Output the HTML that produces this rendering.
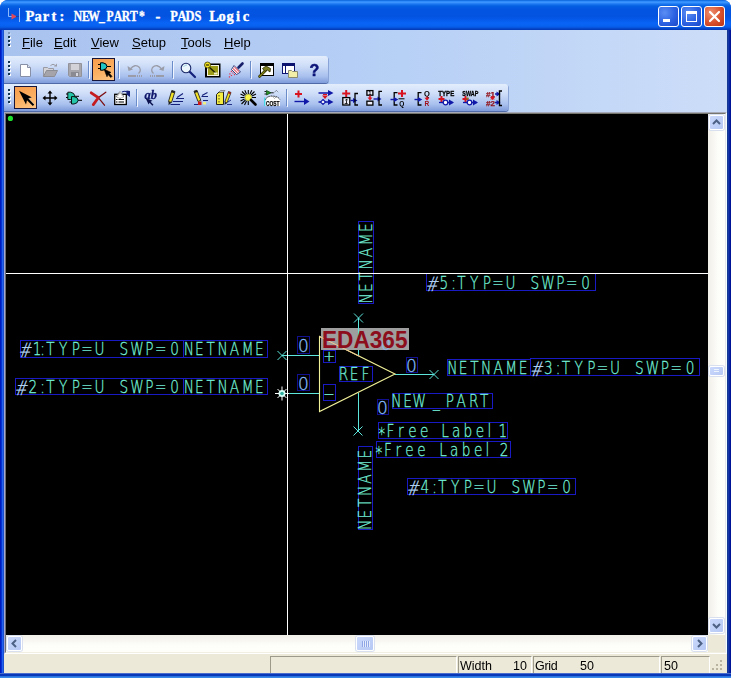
<!DOCTYPE html>
<html>
<head>
<meta charset="utf-8">
<title>Part: NEW_PART* - PADS Logic</title>
<style>
html,body{margin:0;padding:0;background:#fff;}
body{width:731px;height:678px;overflow:hidden;position:relative;font-family:"Liberation Sans",sans-serif;}
#win{position:absolute;left:0;top:0;width:731px;height:678px;background:#0a4fdc;border-radius:8px 8px 0 0;overflow:hidden;}
#win:before{content:"";position:absolute;left:0;top:30px;width:731px;height:648px;background:linear-gradient(to right,#001cc0 0,#001cc0 1px,#0634d4 1px,#0634d4 2px,#2260f0 2px,#2260f0 3px,#1a50d0 3px,#1a50d0 4px,#0a50e0 4px,#0a50e0 727px,#163a94 727px,#163a94 728px,#1636a8 728px,#1636a8 729px,#0624a0 729px,#0624a0 730px,#001498 730px);}
#win:after{content:"";position:absolute;left:0;top:673px;width:731px;height:5px;z-index:3;background:linear-gradient(to bottom,#4a6ccc 0,#4a6ccc 1px,#0838b8 1px,#0838b8 3px,#2a74e0 3px,#2a74e0 4px,#3a88e8 4px);}
#title{position:absolute;left:0;top:0;width:731px;height:30px;
 background:linear-gradient(to bottom,#0058d0 0px,#2a88f8 1px,#3a94fe 2.5px,#1c78f0 4px,#0560e2 6px,#0355e0 9px,#0353e0 16px,#0558e8 19px,#0964f6 23px,#0862f0 26px,#0656e0 27.5px,#0548cc 28.5px,#0338b4 30px);}
#title .txt{position:absolute;left:26px;top:9px;color:#fff;font-family:"Liberation Mono",monospace;font-weight:bold;font-size:15px;letter-spacing:-1px;line-height:18px;white-space:pre;text-shadow:1px 1px 0 #0a2f9a;}
.wb{position:absolute;top:6px;width:19px;height:19px;border:1px solid #fff;border-radius:3px;background:radial-gradient(circle at 30% 30%,#5b8ef4 0%,#2c62e2 55%,#1a48c8 100%);}
.wb.close{background:radial-gradient(circle at 30% 30%,#ee9070 0%,#d8502c 55%,#b83414 100%);}
.wb svg{position:absolute;left:0;top:0;}
#client{position:absolute;left:4px;top:30px;width:723px;height:644px;background:linear-gradient(to right,#a9c3ef,#b4cef5 48%,#ccddf8);z-index:1;}
#menubar{position:absolute;left:0;top:0;width:723px;height:26px;will-change:transform;}
#menubar span{position:absolute;top:5px;font-size:13px;line-height:16px;color:#000;}
.tb{position:absolute;left:0px;height:27px;border-radius:0 3px 3px 0;background:linear-gradient(to bottom,#e3edfc 0%,#cfdef8 35%,#a9c1ee 75%,#7f9cdb 100%);box-shadow:0 1px 0 #4f6aa6,1px 1px 0 #8aa4d8;}
.grip{position:absolute;left:4px;top:5px;width:3px;height:16px;}
.grip i{position:absolute;left:1px;width:2px;height:2px;background:#fff;}
.grip i:before{content:"";position:absolute;left:-1px;top:-1px;width:2px;height:2px;background:#12344e;}
.sep{position:absolute;top:5px;width:1px;height:17px;background:#6a8cc8;box-shadow:1px 1px 0 #f0f5ff;}
.sel{position:absolute;width:21px;height:21px;border:1px solid #16163c;background:linear-gradient(160deg,#f89c4c,#fbb062 55%,#fdc684);}
#frame{position:absolute;left:0;top:82px;width:719px;height:538px;border:2px solid;border-color:#a6aab8 #f4ffff #fff #a2a8d2;background:#ece9d8;}
#frame:before{content:"";position:absolute;left:-1px;top:-1px;width:719px;height:538px;border:1px solid;border-color:#77766e #e6e6ea #f1efe2 #6c6c74;}
#canvas{position:absolute;left:2px;top:84px;width:702px;height:521px;background:#000;overflow:hidden;}
#vs{position:absolute;left:704px;top:84px;width:17px;height:521px;background:linear-gradient(to right,#f1efe8,#fdfdfa 60%,#fefefb);}
#hs{position:absolute;left:2px;top:605px;width:702px;height:17px;background:linear-gradient(to bottom,#f1efe8,#fdfdfa 60%,#fefefb);}
#corner{position:absolute;left:704px;top:605px;width:17px;height:17px;background:#ece9d8;}
.sbtn{position:absolute;width:13px;height:13px;border:1px solid #fff;border-radius:2px;background:linear-gradient(135deg,#cad8fb,#b6c9f4);box-shadow:0 0 0 1px #d8e0f0;}
.sbtn svg{position:absolute;left:0;top:0;}
#status{position:absolute;left:0;top:624px;width:723px;height:20px;background:#ece9d8;}
.pane{position:absolute;top:2px;height:17px;border:1px solid #9d9a8c;border-right-color:#fff;border-bottom-color:#fff;font-size:12.5px;line-height:17px;color:#000;white-space:pre;}
.pane b{position:absolute;font-weight:normal;top:1px;will-change:transform;}
</style>
</head>
<body>
<div id="win">
 <div id="title">
  <svg width="16" height="16" viewBox="0 0 16 16" style="position:absolute;left:7px;top:7px"><path d="M1.500,1V9.500H7M12.500,1V15" stroke="#8cb8fc" fill="none"/><path d="M4.500,6.500L10,9.500L4.500,12.500Z" fill="#e04858"/><path d="M9,9.500H12" stroke="#2040a0"/></svg>
  <svg width="300" height="30" style="position:absolute;left:0;top:0"><g style="font-family:'Liberation Serif',serif;font-weight:bold;font-size:14.500px;fill:#fff;stroke:#fff;stroke-width:0.350px"><text transform="scale(1,1)" x="30.0 38.0 46.0 54.0 62.0" y="21" text-anchor="middle">Part:</text><text transform="scale(0.8,1)" x="97.5 107.5 117.5 127.5 137.5 147.5 157.5 167.5 177.5" y="21" text-anchor="middle">NEW_PART*</text><text transform="scale(1,1)" x="158.0" y="21" text-anchor="middle">-</text><text transform="scale(0.86,1)" x="202.3 211.6 220.9 230.2" y="21" text-anchor="middle">PADS</text><text transform="scale(1,1)" x="214.0 222.0 230.0 238.0 246.0" y="21" text-anchor="middle">Logic</text></g></svg>
  <div class="wb" style="left:658px"><svg width="19" height="19"><rect x="4" y="12" width="7" height="3" fill="#fff"/></svg></div>
  <div class="wb" style="left:681px"><svg width="19" height="19"><rect x="4.500" y="5.500" width="10" height="9" fill="none" stroke="#fff"/><rect x="4" y="4" width="11" height="3" fill="#fff"/></svg></div>
  <div class="wb close" style="left:704px"><svg width="19" height="19"><path d="M5,5L14,14M14,5L5,14" stroke="#fff" stroke-width="2.200" stroke-linecap="round"/></svg></div>
 </div>
 <div id="client">
  <div id="menubar">
   <div class="grip" style="left:4px;top:2px"><i style="top:1px;opacity:0.300"></i><i style="top:5px"></i><i style="top:9px"></i><i style="top:13px"></i></div>
   <span style="left:18px"><u>F</u>ile</span>
   <span style="left:50px"><u>E</u>dit</span>
   <span style="left:87px"><u>V</u>iew</span>
   <span style="left:128px"><u>S</u>etup</span>
   <span style="left:177px"><u>T</u>ools</span>
   <span style="left:220px"><u>H</u>elp</span>
  </div>
  <div class="tb" id="tb1" style="top:26px;width:324px">
   <div class="grip"><i style="top:1px"></i><i style="top:5px"></i><i style="top:9px"></i><i style="top:13px"></i></div>
   <div class="sel" style="left:88px;top:2px"></div>
   <div class="sep" style="left:84px"></div><div class="sep" style="left:114px"></div><div class="sep" style="left:168px"></div><div class="sep" style="left:246px"></div>
  </div>
  <div class="tb" id="tb2" style="top:54px;width:504px">
   <div class="grip"><i style="top:1px"></i><i style="top:5px"></i><i style="top:9px"></i><i style="top:13px"></i></div>
   <div class="sel" style="left:10px;top:2px"></div>
   <div class="sep" style="left:132px"></div><div class="sep" style="left:282px"></div>
  </div>
  <div id="frame"></div>
  <div id="canvas">
<svg id="cv" width="702" height="521" viewBox="6 114 702 521" style="position:absolute;left:0;top:0">
<style>
.t{font-family:"DejaVu Sans Light","DejaVu Sans","Liberation Sans",sans-serif;font-weight:200;font-size:18px;fill:#74f0d8;stroke:#74f0d8;stroke-width:0.3px;}
.p{fill:#86bcff;stroke:#86bcff;}
.h{fill:#b8dcff;stroke:#b8dcff;font-style:italic;font-size:20px;}
.b{fill:none;stroke:#1a1ac4;stroke-width:1;shape-rendering:crispEdges;}
.bd{fill:none;stroke:#101090;stroke-width:1;shape-rendering:crispEdges;}
.l{stroke:#5ce6dc;stroke-width:1;fill:none;shape-rendering:crispEdges;}
.x{stroke:#5ce6dc;stroke-width:1;fill:none;}
</style>
<circle cx="10.400" cy="118.400" r="2.600" fill="#1ce02c"/>
<!-- pin lines -->
<path class="l" d="M282,355.5H320M282,393.5H320M395,374.5H434M358.5,318V355M358.5,393V431"/>
<path class="x" d="M277.5,351l9,9m0,-9l-9,9M429.500,370l9,9m0,-9l-9,9M354,313.500l9,9m0,-9l-9,9M353.500,426.500l9,9m0,-9l-9,9"/>
<!-- body -->
<path d="M319.500,336.500V411.500L395,374Z" fill="none" stroke="#f2f29a" stroke-width="1.100"/>
<!-- label boxes -->
<path class="b" d="M20.500,340.500H183.500V357.500H20.500ZM183.500,340.500H267.500V357.500H183.500ZM15.500,378.500H183.500V394.500H15.500ZM183.500,378.500H267.500V394.500H183.500Z"/>
<path class="b" d="M426.500,273.500H595.500V290.500H426.500ZM447.500,359.500H530.500V375.500H447.500ZM530.500,358.500H699.500V375.500H530.500ZM392.500,393.500H492.500V408.500H392.500ZM378.500,422.500H507.500V438.500H378.500ZM376.500,441.500H510.500V457.500H376.500ZM407.500,478.500H575.500V494.500H407.500Z"/>
<path class="b" d="M358.500,221.500H373.500V303.500H358.500ZM358.500,446.500H372.500V529.500H358.500ZM323.500,350.500H335.500V362.500H323.500ZM323.500,384.500H335.500V400.500H323.500ZM339.500,366.500H372.500V381.500H339.500Z"/>
<path class="bd" d="M297.500,336.500H309.500V353.500H297.500ZM297.500,374.500H309.500V390.500H297.500ZM406.500,357.500H417.500V372.500H406.500ZM377.500,399.500H388.500V414.500H377.500Z"/>
<!-- texts -->
<text class="t" text-anchor="middle" transform="translate(0,355.4) scale(0.76,1)" x="32.5 48.9 55.9 66.2 83.2 99.7 114.5 130.9 146.7 163.0 180.3 196.4 211.5 229.6"><tspan class="h" dy="2">#</tspan><tspan dy="-2">1:TYP=U SWP=0</tspan></text>
<text class="t" text-anchor="middle" transform="translate(0,355.4) scale(0.76,1)" x="248.4 262.4 277.3 292.8 308.4 325.7 341.3">NETNAME</text>
<text class="t" text-anchor="middle" transform="translate(0,392.6) scale(0.76,1)" x="27.0 43.2 55.9 66.2 83.2 99.7 114.5 130.9 146.7 163.0 180.3 196.4 211.5 229.6"><tspan class="h" dy="2">#</tspan><tspan dy="-2">2:TYP=U SWP=0</tspan></text>
<text class="t" text-anchor="middle" transform="translate(0,392.6) scale(0.76,1)" x="248.4 262.4 277.3 292.8 308.4 325.7 341.3">NETNAME</text>
<text class="t" text-anchor="middle" transform="translate(0,288.6) scale(0.76,1)" x="567.8 583.9 596.7 607.0 624.0 640.5 655.3 671.7 687.5 703.8 721.1 737.2 752.3 770.4"><tspan class="h" dy="2">#</tspan><tspan dy="-2">5:TYP=U SWP=0</tspan></text>
<text class="t" text-anchor="middle" transform="translate(0,373.6) scale(0.76,1)" x="595.3 609.3 624.3 639.7 655.4 672.6 688.3">NETNAME</text>
<text class="t" text-anchor="middle" transform="translate(0,373.6) scale(0.76,1)" x="705.3 721.4 734.2 744.5 761.5 778.0 792.8 809.2 825.0 841.3 858.6 874.7 889.8 907.9"><tspan class="h" dy="2">#</tspan><tspan dy="-2">3:TYP=U SWP=0</tspan></text>
<text class="t" text-anchor="middle" transform="translate(0,406.8) scale(0.76,1)" x="521.7 536.2 551.8 574.3 592.1 606.9 623.4 637.2">NEW_PART</text>
<text class="t" text-anchor="middle" transform="translate(0,436.6) scale(0.76,1)" x="502.3 513.7 527.5 542.8 558.2 571.1 585.5 600.3 615.5 631.6 643.8 652.6 661.7"><tspan dy="3.500">*</tspan><tspan dy="-3.500">Free Label 1</tspan></text>
<text class="t" text-anchor="middle" transform="translate(0,455.6) scale(0.76,1)" x="498.7 510.4 524.2 538.9 554.6 568.4 583.0 597.7 613.2 629.1 641.4 651.3 663.2"><tspan dy="3.500">*</tspan><tspan dy="-3.500">Free Label 2</tspan></text>
<text class="t" text-anchor="middle" transform="translate(0,492.8) scale(0.76,1)" x="542.8 558.9 571.7 582.0 599.0 615.5 630.3 646.7 662.5 678.8 696.1 712.2 727.3 745.4"><tspan class="h" dy="2">#</tspan><tspan dy="-2">4:TYP=U SWP=0</tspan></text>
<text class="t" text-anchor="middle" transform="translate(371.6,303) rotate(-90) scale(0.76,1)" x="6.2 20.3 35.2 50.7 66.3 83.6 99.2">NETNAME</text>
<text class="t" text-anchor="middle" transform="translate(370.6,529.5) rotate(-90) scale(0.76,1)" x="6.2 20.3 35.2 50.7 66.3 83.6 99.2">NETNAME</text>
<text class="t" text-anchor="middle" transform="translate(0,379.8) scale(0.76,1)" x="452.0 465.9 480.8">REF</text>
<text class="t" x="329" y="361" text-anchor="middle" style="font-size:14px">+</text>
<text class="t" x="329" y="399" text-anchor="middle" style="font-size:14px">−</text>
<text class="t p" x="298" y="352" style="font-size:17px">0</text>
<text class="t p" x="298" y="390" style="font-size:17px">0</text>
<text class="t p" x="406" y="372" style="font-size:17px">0</text>
<text class="t p" x="377" y="414" style="font-size:17px">0</text>
<!-- pin 2 marker -->
<g transform="translate(282,393.500)"><path d="M0,-7V7M-7,0H7M-4.500,-4.500L4.500,4.500M4.500,-4.500L-4.500,4.500" stroke="#fff" stroke-width="1"/><circle r="3.500" fill="#d8fff8"/><circle r="1.800" fill="#30b0a0"/></g>
<!-- watermark -->
<rect x="321" y="328" width="88" height="22" fill="#9e9e9e"/>
<path d="M319.500,336.500L360,356.600" stroke="#f0c890" stroke-width="1"/>
<path class="l" d="M358.500,328V340"/>
<text class="t p" x="381" y="350" style="font-size:16px" opacity="0.750">0</text>
<text x="322" y="348" style="font-family:'Liberation Sans',sans-serif;font-weight:bold;font-size:23px;fill:#8c0d1c" textLength="85.500" lengthAdjust="spacingAndGlyphs">EDA365</text>
<!-- cursor -->
<path d="M287.500,113V635M6,273.500H708" stroke="#fff" stroke-width="1" shape-rendering="crispEdges"/>
</svg>
  </div>
  <div id="vs">
   <div class="sbtn" style="left:1px;top:1px"><svg width="13" height="13"><path d="M3,8L6.500,4.500L10,8" stroke="#4d6185" stroke-width="2" fill="none"/></svg></div>
   <div class="sbtn" style="left:1px;top:252px;height:8px"><svg width="13" height="8"><path d="M4,2.500H9M4,4.500H9" stroke="#eef4fe" stroke-width="1"/></svg></div>
   <div class="sbtn" style="left:1px;top:504px"><svg width="13" height="13"><path d="M3,5L6.500,8.500L10,5" stroke="#4d6185" stroke-width="2" fill="none"/></svg></div>
  </div>
  <div id="hs">
   <div class="sbtn" style="left:1px;top:1px"><svg width="13" height="13"><path d="M8,3L4.500,6.500L8,10" stroke="#4d6185" stroke-width="2" fill="none"/></svg></div>
   <div class="sbtn" style="left:350px;top:1px;width:16px"><svg width="16" height="13"><path d="M5.500,4V10M7.500,4V10M9.500,4V10M11.500,4V10" stroke="#8ea6e6" stroke-width="1"/><path d="M6.500,4V10M8.500,4V10M10.500,4V10M12.500,4V10" stroke="#f4f8ff" stroke-width="1" opacity="0.700"/></svg></div>
   <div class="sbtn" style="left:686px;top:1px"><svg width="13" height="13"><path d="M5,3L8.500,6.500L5,10" stroke="#4d6185" stroke-width="2" fill="none"/></svg></div>
  </div>
  <div id="corner"></div>
  <div id="status">
   <div class="pane" style="left:266px;width:185px"></div>
   <div class="pane" style="left:454px;width:72px"><b style="left:1px">Width</b><b style="right:4px">10</b></div>
   <div class="pane" style="left:529px;width:125px"><b style="left:0.500px;letter-spacing:-0.300px">Grid</b><b style="left:45.500px">50</b></div>
   <div class="pane" style="left:657px;width:47px"><b style="left:2px">50</b></div>
   <svg width="14" height="14" style="position:absolute;left:707px;top:5px"><g fill="#b8b4a0"><rect x="9" y="1" width="2" height="2"/><rect x="5" y="5" width="2" height="2"/><rect x="9" y="5" width="2" height="2"/><rect x="1" y="9" width="2" height="2"/><rect x="5" y="9" width="2" height="2"/><rect x="9" y="9" width="2" height="2"/></g></svg>
  </div>
 </div>
<svg id="ic" width="731" height="113" viewBox="0 0 731 113" style="position:absolute;left:0;top:0;pointer-events:none;z-index:5;will-change:transform">
<defs>
<style>
.it{font-family:"Liberation Sans",sans-serif;font-weight:bold;}
.ce{shape-rendering:crispEdges;}
</style>
</defs>
<!-- ===== toolbar 1 ===== -->
<!-- new -->
<g transform="translate(18,62)"><path d="M2.500,2.500H9.500L12.500,5.500V14.500H2.500Z" fill="#fff" stroke="#8790a6"/><path d="M9.500,2.500V5.500H12.500" fill="#e4e8f0" stroke="#8790a6"/></g>
<!-- open (disabled) -->
<g transform="translate(42,62)"><path d="M1.500,14.500V5.500H5.500L6.500,6.500H11.500V8.500" fill="#d4d4d8" stroke="#9a9aa2"/><path d="M1.500,14.500L4.500,8.500H15.500L12.500,14.500Z" fill="#a4a4aa" stroke="#8c8c94"/><path d="M8.500,3.500Q11,1 13.500,3.500" fill="none" stroke="#9a9aa2"/><path d="M12,4.500H15V1.500Z" fill="#9a9aa2"/></g>
<!-- save (disabled) -->
<g transform="translate(66,62)"><path d="M2.500,1.500H15.500V14.500H3.500L2.500,13.500Z" fill="#a6a6ac" stroke="#92929a"/><rect x="5" y="2" width="8" height="6" fill="#d2d2d8"/><rect x="5" y="10" width="8" height="5" fill="#8a8a92"/><rect x="10" y="11" width="2" height="3" fill="#d8d8de"/></g>
<!-- select gate -->
<g transform="translate(96,62)"><path d="M2,2.500H5M2,6.500H5M10,4.500H15" stroke="#000" fill="none"/><path d="M4.500,0.800H7Q11,1.500 11,4.500Q10.500,7.500 7,8.200H4.500Z" fill="#20c4c4" stroke="#000"/><path d="M8,7L15,10.500L13.200,11.300L16,14.300L14.800,15.500L12,12.600L11,14.800Z" fill="#000" stroke="#000" stroke-width="0.600"/></g>
<!-- undo (disabled) -->
<g transform="translate(126,62)" fill="none" stroke="#9a9ca8"><path d="M4,7.500Q9,1 13.500,5.500Q15.500,9 12.500,11.500" stroke-width="1.300"/><path d="M1.500,4L2.500,9L7,7.500Z" fill="#9a9ca8" stroke="none"/><path d="M2,14H10" stroke-width="2"/><path d="M11,14H16" stroke-width="2" stroke-dasharray="1 1"/></g>
<!-- redo (disabled) -->
<g transform="translate(166,62) scale(-1,1)" fill="none" stroke="#9a9ca8"><path d="M4,7.500Q9,1 13.500,5.500Q15.500,9 12.500,11.500" stroke-width="1.300"/><path d="M1.500,4L2.500,9L7,7.500Z" fill="#9a9ca8" stroke="none"/><path d="M2,14H10" stroke-width="2"/><path d="M11,14H16" stroke-width="2" stroke-dasharray="1 1"/></g>
<!-- zoom -->
<g transform="translate(180,62)"><path d="M9.500,9.500L15,15" stroke="#14207a" stroke-width="2.200" stroke-linecap="round"/><circle cx="6" cy="6" r="4.800" fill="#eaf6fb" stroke="#1a2668" stroke-width="1.100"/><path d="M3.500,5Q4.500,2.800 7,3" stroke="#9fd0e0" fill="none"/></g>
<!-- sheet -->
<g transform="translate(204,62)"><rect x="1" y="1.500" width="15.500" height="14" fill="#000"/><rect x="3" y="3" width="12" height="11" fill="#f4f4e0"/><rect x="4" y="4" width="10" height="9" fill="#9c9c18"/><path d="M4,4L11.500,11" stroke="#202000" stroke-width="1.400"/><rect x="10" y="10.500" width="3.500" height="2" fill="#f4f4c0"/><circle cx="3.500" cy="3" r="3" fill="#f0e020" stroke="#404000" stroke-width="0.800"/><path d="M2,3H5" stroke="#000"/></g>
<!-- brush -->
<g transform="translate(228,62)"><path d="M10.500,5.500L14.500,1.500" stroke="#18206a" stroke-width="2.600" stroke-linecap="round"/><path d="M6,3.500L12.500,10L8.500,12.500L3.500,7.500Z" fill="#fff" stroke="#2a3070" stroke-width="0.900"/><path d="M5,6.500L9.500,11M6.500,5L11,9.500" stroke="#e86a7a" stroke-width="1.100"/><path d="M3,9L7,13M1.500,11.500L4.500,14.500M1,14.500L2,15.500" stroke="#e83048" stroke-width="1.200" stroke-dasharray="1.200 1"/></g>
<!-- hammer window -->
<g transform="translate(258,62)"><rect x="2.500" y="1.500" width="13" height="12" fill="#fff" stroke="#000"/><rect x="2" y="1" width="14" height="3" fill="#000"/><path d="M1.500,14.500L8,8" stroke="#2c2c00" stroke-width="2.600" stroke-linecap="round"/><path d="M1.500,14.500L8,8" stroke="#8a8a18" stroke-width="1.100" stroke-linecap="round"/><path d="M4.500,6.500L8,4L12.500,6.500L12,10L9.300,8L7,9.500Z" fill="#7c7c20" stroke="#2c2c00" stroke-width="0.800"/></g>
<!-- project window -->
<g transform="translate(282,62)"><rect x="0.500" y="1.500" width="12" height="10" fill="#fff" stroke="#0c1470"/><rect x="0" y="1" width="13" height="3" fill="#0c1470"/><path d="M3.500,4V12" stroke="#0c1470"/><path d="M6.500,15.500V8.500H9.500L10.500,9.500H15.500V15.500Z" fill="#f2f0a8" stroke="#8a8a70"/></g>
<!-- help -->
<text class="it" x="314.500" y="75.800" text-anchor="middle" font-size="16" fill="#0c1478" stroke="#0c1478" stroke-width="0.500">?</text>
<!-- ===== toolbar 2 ===== -->
<!-- select arrow -->
<g transform="translate(18,90)"><path d="M1,0.800L14,7.500L10.600,8.600L16.300,14.500L14.800,16L9,10.300L8,14.600Z" fill="#000"/><path d="M14,7.500L10.600,8.600L16.300,14.500" fill="none" stroke="#fff" stroke-width="0.500" opacity="0.600"/></g>
<!-- move -->
<g transform="translate(42,90)" stroke="#000" fill="#000"><path d="M8,2V14M2,8H14" stroke-width="1.400" fill="none"/><path d="M8,0.500L10.500,3.500H5.500ZM8,15.500L10.500,12.500H5.500ZM0.500,8L3.500,5.500V10.500ZM15.500,8L12.500,5.500V10.500Z" stroke="none"/></g>
<!-- gates -->
<g transform="translate(66,90)"><path d="M0,4H2M0,7.500H2M8.500,6.300H13M3.500,8.500H5.500M3.500,12H5.500M12,10.300H16" stroke="#000" fill="none"/><path d="M1.800,2.200H4.500Q8.500,2.800 8.700,5.800Q8.500,8.800 4.500,9.500H1.800Z" fill="#24c4a8" stroke="#000" stroke-width="0.900"/><path d="M5.500,6.600H8Q12,7.200 12.200,10.300Q12,13.300 8,14H5.500Z" fill="#24c4a8" stroke="#000" stroke-width="0.900"/></g>
<!-- delete -->
<g transform="translate(90,90)"><path d="M15.800,2.200L8.300,7.700L14.500,15.200" stroke="#7c1014" stroke-width="1.300" fill="none" stroke-linecap="round"/><path d="M1.200,2.800L8.300,7.700L3.300,14.600" stroke="#c41c20" stroke-width="2.800" fill="none" stroke-linecap="round" stroke-linejoin="round"/></g>
<!-- properties -->
<g transform="translate(114,90)"><rect x="0.700" y="4.300" width="11.600" height="10.200" fill="#fff" stroke="#000" stroke-width="1.300"/><path d="M2,9.500H3.500M4.500,9.500H10M2,12H3.500M4.500,12H10" stroke="#000" stroke-width="1.200"/><path d="M2,6.500L6,1.500L10,6.500L6,8.500Z" fill="#fff" stroke="#404040" stroke-width="0.800" stroke-dasharray="1 0.600"/><path d="M3.500,6L6,3L8.500,6" fill="none" stroke="#606060" stroke-width="0.800" stroke-dasharray="0.800 0.800"/><path d="M8,2Q11,0.500 13,2" stroke="#14207a" fill="none" stroke-width="1.200"/><path d="M12.500,0.500L16,1V7L12.500,4.500Z" fill="#14207a"/></g>
<!-- ab -->
<g transform="translate(144,90)"><text x="0.500" y="8.500" font-family="Liberation Serif,serif" font-style="italic" font-weight="bold" font-size="12.500" fill="#10186c" stroke="#10186c" stroke-width="0.300">ab</text><path d="M1.500,8L8.500,10.800L6.600,11.700L9.500,14.800L8.400,15.800L5.600,12.800L4.600,14.600Z" fill="#0c1250"/></g>
<!-- pencil lines -->
<g transform="translate(168,90)"><path d="M3.800,0.500L7,1.500L3.500,12.500L0.500,11.500Z" fill="#f4e428" stroke="#202020" stroke-width="0.900"/><path d="M3.800,0.500L7,1.500L6.400,3.300L3.200,2.300Z" fill="#202020"/><path d="M0.500,11.500L3.500,12.500L0.600,15.300Z" fill="#202020"/><path d="M9,7.500L15,3.500M8,8.500H16M5,11.500H15M2.500,14.500H12" stroke="#14207a" fill="none" stroke-width="1.100"/></g>
<!-- pencil dot -->
<g transform="translate(192,90)"><path d="M2,1.200L5,0.300L8.800,10.300L6,11.500Z" fill="#f4e428" stroke="#202020" stroke-width="0.900"/><path d="M2,1.200L5,0.300L5.600,2L2.700,3Z" fill="#202020"/><path d="M10,5.500L15.500,2.500M9.500,6.500H16M11,10.500H16M2,14.500H7" stroke="#14207a" fill="none" stroke-width="1.100"/><rect x="6" y="11.500" width="3.500" height="3.500" fill="#d01818"/><rect x="11" y="12" width="3" height="2.500" fill="#f0f080"/></g>
<!-- ruler pencil -->
<g transform="translate(216,90)"><path d="M0.500,4.500L3,2H7.500V14.500H0.500Z" fill="#f4ec40" stroke="#202020"/><path d="M3,5V6.500M3,8V9.500M3,11V12.500" stroke="#202020" stroke-width="0.800"/><path d="M3,2L4.500,0.500H9L7.500,2" fill="#b8c0c8" stroke="#606060" stroke-width="0.600"/><path d="M12.500,1.500L15,2.500L11,13L8.800,12Z" fill="#f0e020" stroke="#202020" stroke-width="0.800"/><path d="M12.500,1.500L15,2.500L14.400,4.200L12,3.200Z" fill="#a02020"/><path d="M8.800,12L11,13L8.500,15Z" fill="#202020"/><path d="M11,14.500H16M12,12L15,10" stroke="#14207a" stroke-width="0.900"/></g>
<!-- sun -->
<g transform="translate(240,90)"><path d="M8.300,0V4M8.300,11V15M0.500,7.500H4.500M12,7.500H16M2,1.500L5.500,5M14.500,1.500L11,5M1.500,14L5.500,10M4.800,0.300L6.500,4M11.800,0.300L10,4M0.500,4L4.500,6M16,4L12,6M0.500,11L4.500,9M4.500,15L6.500,11" stroke="#000" stroke-width="1.100"/><circle cx="8.300" cy="7.500" r="3.300" fill="#f8f448" stroke="#787800" stroke-width="0.500"/><path d="M11,10L15.500,14.500" stroke="#000" stroke-width="2.600" stroke-linecap="round"/></g>
<!-- cost -->
<g transform="translate(264,90)"><path d="M1.500,16V10Q2,6.500 8,6Q14.500,6.500 16,9.500V16Z" fill="#fff"/><path d="M1.500,10Q2,6.500 8,6Q14.500,6.500 15.800,9.500" fill="none" stroke="#000" stroke-width="0.800" stroke-dasharray="1.500 0.800"/><path d="M0.500,1.500H2.500M0.500,4H2.500M6.500,2.800H9.500" stroke="#000" stroke-width="0.900"/><path d="M2.500,0.500L7,2.800L2.500,5Z" fill="#289028" stroke="#0c400c" stroke-width="0.700"/><path d="M9.500,2.800L12.500,0.500L14.500,2.500M8.500,6.500L10.500,8.500L12.500,6.500" stroke="#303030" fill="none" stroke-width="0.700" stroke-dasharray="1 0.700"/><rect x="0" y="7.500" width="1.300" height="8.500" fill="#48d8e8"/><text class="it" x="8.700" y="15.700" text-anchor="middle" font-size="7.800" fill="#000" stroke="#000" stroke-width="0.250" textLength="13.500" lengthAdjust="spacingAndGlyphs">COST</text></g>
<!-- add pin -->
<g transform="translate(294,90)"><path d="M4.500,0.500V7.500M1,4H8" stroke="#d81420" stroke-width="2"/><path d="M0.500,11.500H11" stroke="#1018a8" stroke-width="1.400"/><path d="M10,8L15.500,11.500L10,15Z" fill="#1018a8"/></g>
<!-- change seq -->
<g transform="translate(318,90)"><path d="M0.500,3H11M0.500,12H11" stroke="#1018a8" stroke-width="1.400"/><path d="M10,0L15.500,3L10,6ZM10,9L15.500,12L10,15Z" fill="#1018a8"/><path d="M4,5.500H10L7,9Z" fill="#d81420"/><path d="M5,4.500H9" stroke="#d81420" stroke-width="1"/><path d="M5,9.500L7.500,12L5,14.500L2.500,12Z" fill="#fff" stroke="#1018a8" stroke-width="1.200"/></g>
<!-- add terminal -->
<g transform="translate(342,90)"><path d="M4.200,0V7M0.200,3.500H8.200" stroke="#d81420" stroke-width="2"/><rect x="0.800" y="7.600" width="7" height="7.400" fill="#eeeefa" stroke="#000" stroke-width="1.300"/><text class="it" x="4.300" y="13.800" text-anchor="middle" font-size="6.500" font-style="italic" fill="#000">1</text><path d="M8.500,10.500H13" stroke="#1018a8" stroke-width="1.400"/><path d="M11,8L15.500,10.500L11,13Z" fill="#1018a8"/><path d="M16,3.500H13V15H16" fill="none" stroke="#000" stroke-width="1.300"/></g>
<!-- set pin number -->
<g transform="translate(366,90)"><rect x="0.900" y="0.600" width="6" height="4.600" fill="#eeeefa" stroke="#000" stroke-width="1.300"/><text class="it" x="4" y="4.800" text-anchor="middle" font-size="5" fill="#000">1</text><path d="M4,5.500V8" stroke="#d81420" stroke-width="1.600"/><path d="M1.500,7.500H6.500L4,10.500Z" fill="#d81420"/><rect x="0.900" y="11.200" width="6" height="3.900" fill="#eeeefa" stroke="#000" stroke-width="1.300"/><path d="M7.500,9H13" stroke="#1018a8" stroke-width="1.400"/><path d="M11.500,6.500L15.500,9L11.500,11.500Z" fill="#1018a8"/><path d="M16,1.300H13V15H16" fill="none" stroke="#000" stroke-width="1.300"/></g>
<!-- pin name -->
<g transform="translate(390,90)"><path d="M7.500,2.600H4.200V15H7.500" fill="none" stroke="#000" stroke-width="1.300"/><path d="M0.500,9.500H5" stroke="#1018a8" stroke-width="1.400"/><path d="M4,7L8.300,9.500L4,12Z" fill="#1018a8"/><path d="M12,0V7M8,3.500H16" stroke="#d81420" stroke-width="2"/><path d="M8.500,8.800H14.500" stroke="#000" stroke-width="1"/><text class="it" x="11.700" y="15.600" text-anchor="middle" font-size="6.500" fill="#000">Q</text></g>
<!-- rename pin -->
<g transform="translate(414,90)"><path d="M7.500,2.600H4.200V15H7.500" fill="none" stroke="#000" stroke-width="1.300"/><path d="M0.500,9.500H5" stroke="#1018a8" stroke-width="1.400"/><path d="M4,7L8.300,9.500L4,12Z" fill="#1018a8"/><text class="it" x="13" y="6" text-anchor="middle" font-size="7.500" fill="#000">Q</text><path d="M13,6.500V8.500" stroke="#d81420" stroke-width="1.400"/><path d="M10.500,7.700H15.500L13,10.700Z" fill="#d81420"/><text class="it" x="12.800" y="16" text-anchor="middle" font-size="6.500" fill="#a01018">R</text></g>
<!-- TYPE -->
<g transform="translate(438,90)"><text class="it" x="8.300" y="5.800" text-anchor="middle" font-size="7.500" fill="#000" stroke="#000" stroke-width="0.300" textLength="16" lengthAdjust="spacingAndGlyphs">TYPE</text><path d="M3.500,6V12M0.500,9H6.500" stroke="#d81420" stroke-width="2"/><path d="M1,12.500H15" stroke="#1018a8" stroke-width="1.300"/><circle cx="7.500" cy="12.500" r="2.300" fill="#fff" stroke="#1018a8" stroke-width="1.300"/><path d="M11,9.500L16,12.500L11,15.500Z" fill="#1018a8"/></g>
<!-- SWAP -->
<g transform="translate(462,90)"><text class="it" x="8.300" y="5.800" text-anchor="middle" font-size="7.500" fill="#000" stroke="#000" stroke-width="0.300" textLength="16" lengthAdjust="spacingAndGlyphs">SWAP</text><path d="M3.500,6V12M0.500,9H6.500" stroke="#d81420" stroke-width="2"/><rect x="4.500" y="7.500" width="2" height="2" fill="#808020"/><path d="M1,12.500H15" stroke="#1018a8" stroke-width="1.300"/><circle cx="7.500" cy="12.500" r="2.300" fill="#fff" stroke="#1018a8" stroke-width="1.300"/><path d="M11,9.500L16,12.500L11,15.500Z" fill="#1018a8"/></g>
<!-- #1 #2 -->
<g transform="translate(486,90)"><text class="it" x="0" y="6.500" font-size="8" fill="#901018" stroke="#901018" stroke-width="0.250" textLength="9" lengthAdjust="spacingAndGlyphs">#1</text><text class="it" x="0" y="16" font-size="8" fill="#901018" stroke="#901018" stroke-width="0.250" textLength="9" lengthAdjust="spacingAndGlyphs">#2</text><path d="M6.500,6V8" stroke="#d81420" stroke-width="1.400"/><path d="M4,7H9L6.500,10Z" fill="#d81420"/><path d="M4,9.500H9L6.500,6.500Z" fill="#d81420" opacity="0.600"/><path d="M9,4H12M9,12.500H12" stroke="#1018a8" stroke-width="1.300"/><path d="M10.500,1.500L14.500,4L10.500,6.500ZM10.500,10L14.500,12.500L10.500,15Z" fill="#1018a8"/><path d="M16,1H13.500V15.500H16" fill="none" stroke="#000" stroke-width="1.400"/></g>
</svg>
</div>
</body>
</html>
